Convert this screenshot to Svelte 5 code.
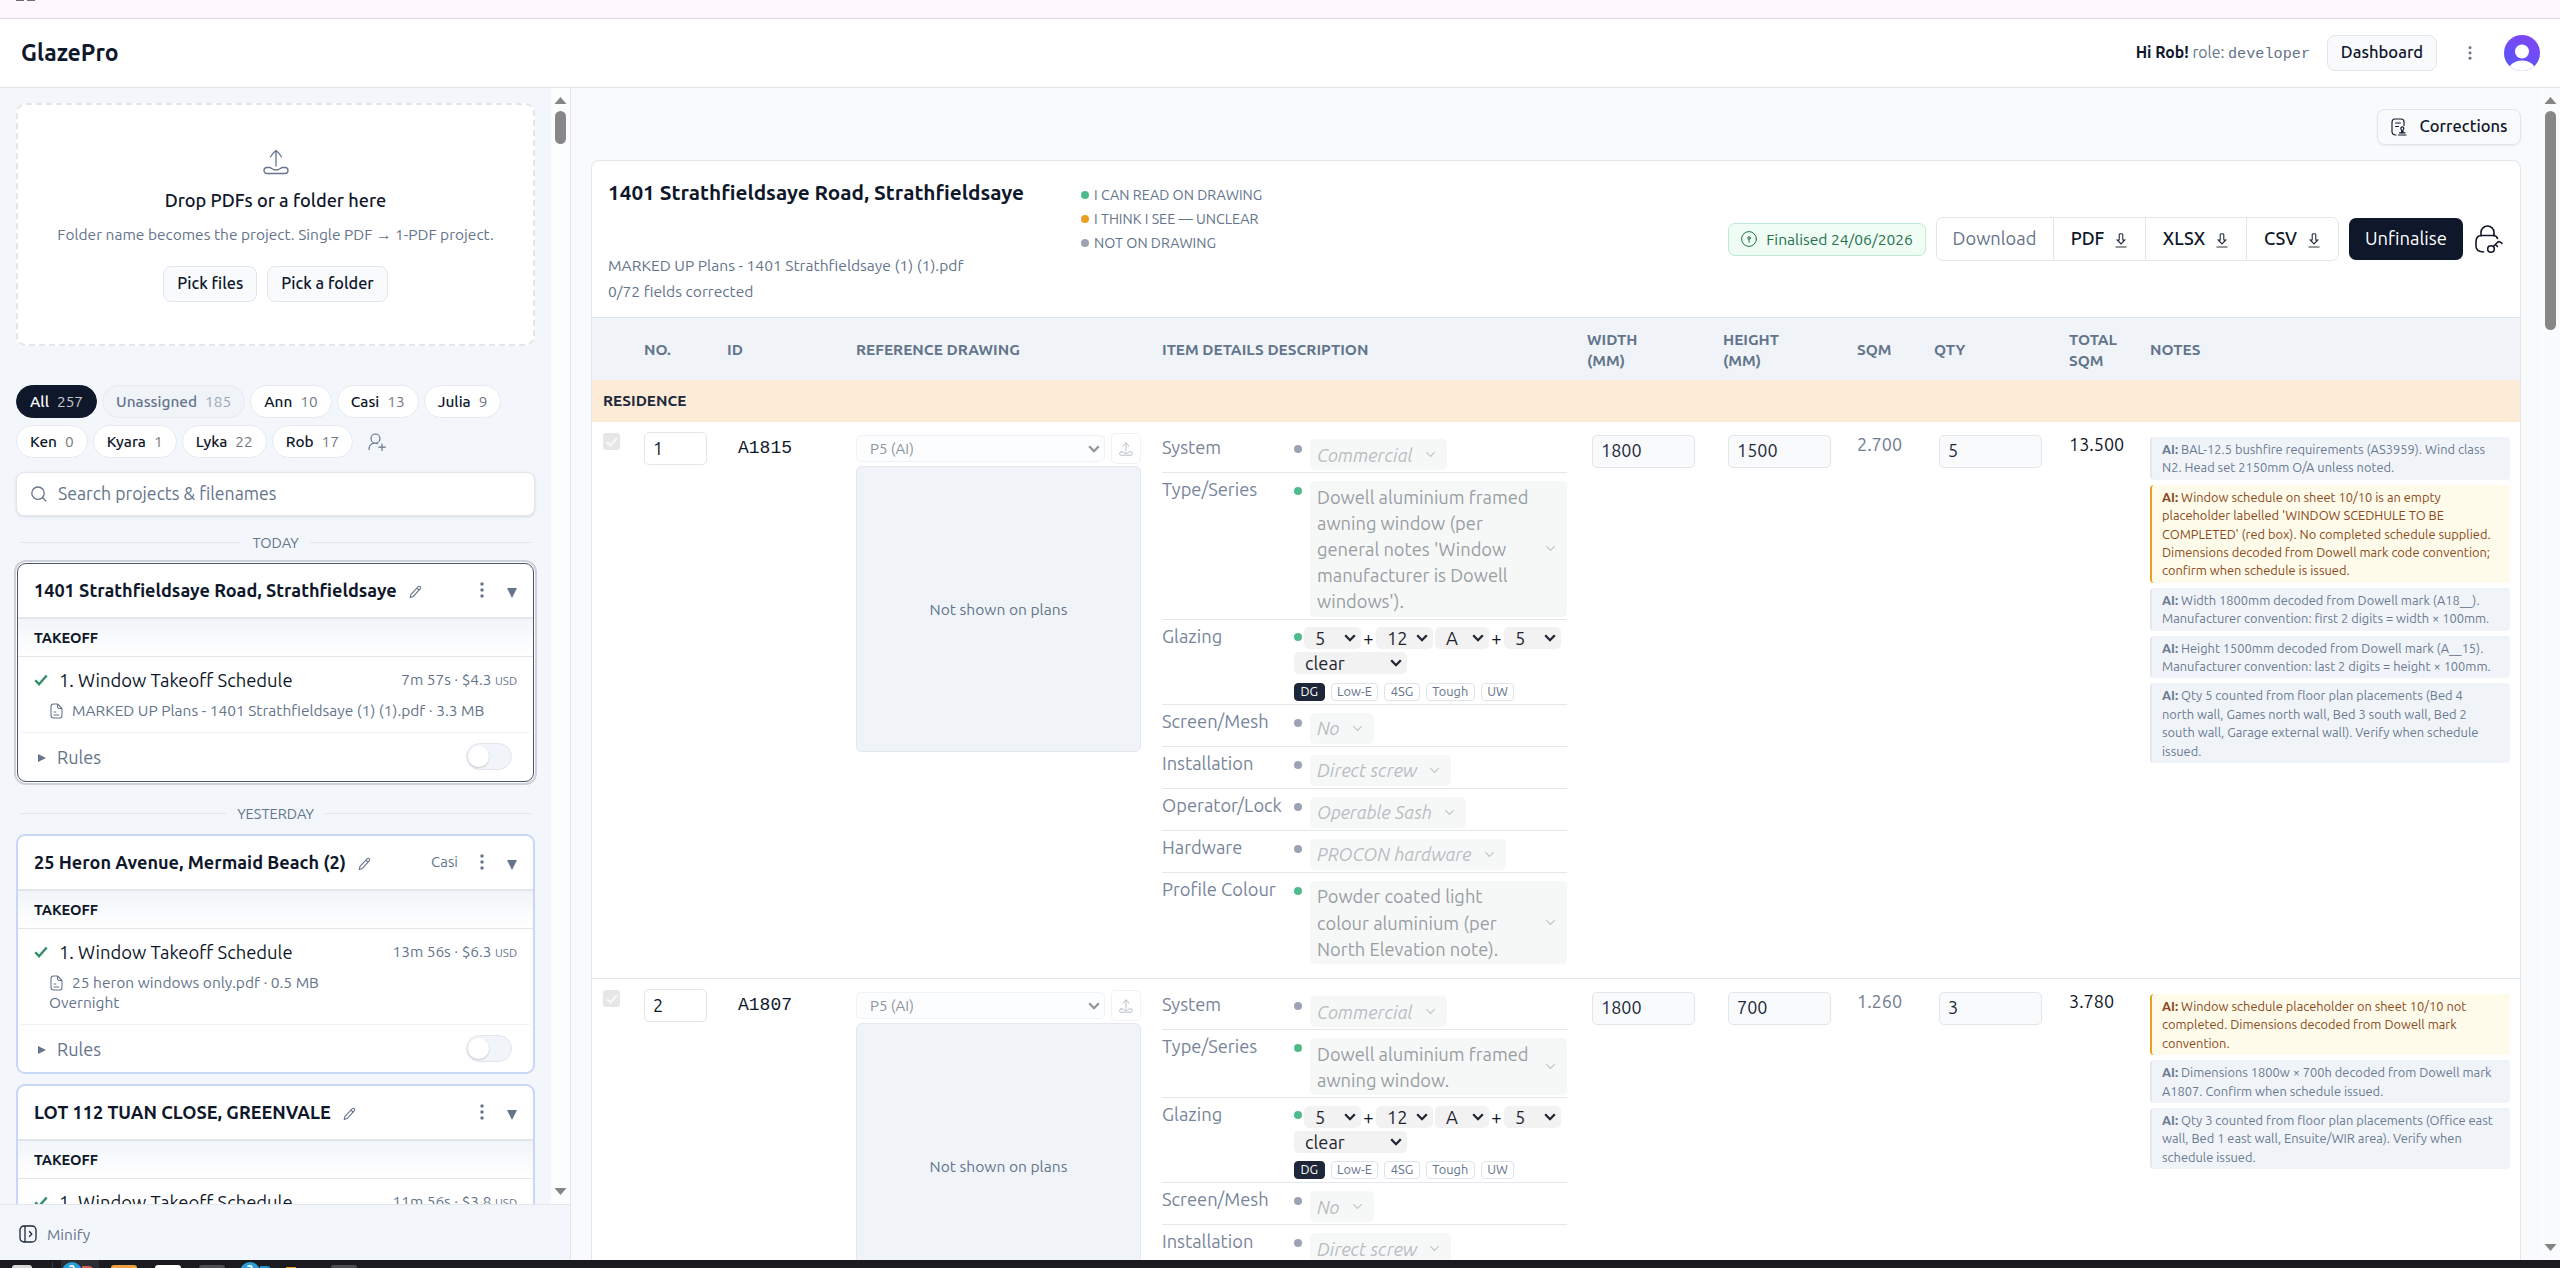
<script lang="ts">
  interface Note {
    text: string;
    warn?: boolean;
  }

  interface Item {
    no: number;
    id: string;
    series: string;
    width: number;
    height: number;
    sqm: string;
    qty: number;
    total: string;
    notes: Note[];
  }

  interface Project {
    title: string;
    owner?: string;
    time: string;
    cost: string;
    file: string;
    extra?: string;
    selected?: boolean;
  }

  const people = [
    { name: "All", count: 257, kind: "active" },
    { name: "Unassigned", count: 185, kind: "faded" },
    { name: "Ann", count: 10 },
    { name: "Casi", count: 13 },
    { name: "Julia", count: 9 },
    { name: "Ken", count: 0 },
    { name: "Kyara", count: 1 },
    { name: "Lyka", count: 22 },
    { name: "Rob", count: 17 },
  ];

  const today: Project[] = [
    {
      title: "1401 Strathfieldsaye Road, Strathfieldsaye",
      time: "7m 57s",
      cost: "$4.3",
      file: "MARKED UP Plans - 1401 Strathfieldsaye (1) (1).pdf · 3.3 MB",
      selected: true,
    },
  ];

  const yesterday: Project[] = [
    {
      title: "25 Heron Avenue, Mermaid Beach (2)",
      owner: "Casi",
      time: "13m 56s",
      cost: "$6.3",
      file: "25 heron windows only.pdf · 0.5 MB",
      extra: "Overnight",
    },
    {
      title: "LOT 112 TUAN CLOSE, GREENVALE",
      time: "11m 56s",
      cost: "$3.8",
      file: "",
    },
  ];

  const legend = [
    { tone: "green", label: "I CAN READ ON DRAWING" },
    { tone: "amber", label: "I THINK I SEE — UNCLEAR" },
    { tone: "grey", label: "NOT ON DRAWING" },
  ];

  const columns = [
    "",
    "NO.",
    "ID",
    "REFERENCE DRAWING",
    "ITEM DETAILS DESCRIPTION",
    "WIDTH (MM)",
    "HEIGHT (MM)",
    "SQM",
    "QTY",
    "TOTAL SQM",
    "NOTES",
  ];

  const formats = ["PDF", "XLSX", "CSV"];
  const tags = ["DG", "Low-E", "4SG", "Tough", "UW"];

  const items: Item[] = [
    {
      no: 1,
      id: "A1815",
      series: "Dowell aluminium framed awning window (per general notes 'Window manufacturer is Dowell windows').",
      width: 1800,
      height: 1500,
      sqm: "2.700",
      qty: 5,
      total: "13.500",
      notes: [
        { text: "BAL-12.5 bushfire requirements (AS3959). Wind class N2. Head set 2150mm O/A unless noted." },
        {
          text: "Window schedule on sheet 10/10 is an empty placeholder labelled 'WINDOW SCEDHULE TO BE COMPLETED' (red box). No completed schedule supplied. Dimensions decoded from Dowell mark code convention; confirm when schedule is issued.",
          warn: true,
        },
        { text: "Width 1800mm decoded from Dowell mark (A18__). Manufacturer convention: first 2 digits = width × 100mm." },
        { text: "Height 1500mm decoded from Dowell mark (A__15). Manufacturer convention: last 2 digits = height × 100mm." },
        { text: "Qty 5 counted from floor plan placements (Bed 4 north wall, Games north wall, Bed 3 south wall, Bed 2 south wall, Garage external wall). Verify when schedule issued." },
      ],
    },
    {
      no: 2,
      id: "A1807",
      series: "Dowell aluminium framed awning window.",
      width: 1800,
      height: 700,
      sqm: "1.260",
      qty: 3,
      total: "3.780",
      notes: [
        {
          text: "Window schedule placeholder on sheet 10/10 not completed. Dimensions decoded from Dowell mark convention.",
          warn: true,
        },
        { text: "Dimensions 1800w × 700h decoded from Dowell mark A1807. Confirm when schedule issued." },
        { text: "Qty 3 counted from floor plan placements (Office east wall, Bed 1 east wall, Ensuite/WIR area). Verify when schedule issued." },
      ],
    },
  ];
</script>

{#snippet chevron(cls: string)}
  <svg class="chev {cls}" viewBox="0 0 12 8"><path d="M1.2 1.2 6 6.2l4.8-5" /></svg>
{/snippet}

{#snippet uploadIcon(cls: string)}
  <svg class="line {cls}" viewBox="0 0 26 26">
    <path d="M13 17V2M7.500 8C9 5.500 11 3 13 1.500 15 3 17 5.500 18.500 8" />
    <path d="M4 18.500h2.500c2 0 2.500 2.500 6.500 2.500s4.500-2.500 6.500-2.500H22c1.800 0 3 1.200 3 3s-1.200 3-3 3H4c-1.800 0-3-1.200-3-3s1.200-3 3-3Z" />
  </svg>
{/snippet}

{#snippet kebab()}
  <svg class="kebab" viewBox="0 0 4 16">
    <circle cx="2" cy="2" r="1.700" /><circle cx="2" cy="8" r="1.700" /><circle cx="2" cy="14" r="1.700" />
  </svg>
{/snippet}

{#snippet projectCard(p: Project)}
  <section class="project" class:selected={p.selected}>
    <div class="project-head">
      <h3>{p.title}</h3>
      <svg class="line pencil" viewBox="0 0 13 14">
        <path d="M1.200 12.600 2 9.400 9.300 1.700c.6-.6 1.500-.6 2 0s.6 1.400 0 2L4.200 11.600 1.200 12.600ZM8 3.200l2.100 2.100" />
      </svg>
      <span class="grow"></span>
      {#if p.owner}<span class="owner">{p.owner}</span>{/if}
      {@render kebab()}
      <svg class="tri" viewBox="0 0 10 10"><path d="M0 0h10L5 10Z" /></svg>
    </div>
    <div class="takeoff">TAKEOFF</div>
    <div class="job">
      <div class="job-main">
        <svg class="check" viewBox="0 0 14 12"><path d="M1.300 6.200 5 10.200 12.700 1.500" /></svg>
        <span class="job-name">1. Window Takeoff Schedule</span>
        <span class="grow"></span>
        <span class="job-meta">{p.time} · {p.cost} <small>USD</small></span>
      </div>
      {#if p.file}
        <div class="job-file">
          <svg class="line doc" viewBox="0 0 13 16">
            <path d="M7.500 1H3.500C2 1 1 2 1 3.500v9C1 14 2 15 3.500 15h6c1.500 0 2.500-1 2.500-2.500V5.500ZM7.500 1v3c0 1 .5 1.500 1.500 1.500h3M4 9h2M4 12h5" />
          </svg>
          {p.file}
        </div>
      {/if}
      {#if p.extra}<div class="job-extra">{p.extra}</div>{/if}
    </div>
    {#if p.file}
      <div class="rules">
        <svg class="play" viewBox="0 0 8 8"><path d="M0 0 8 4 0 8Z" /></svg>
        <span>Rules</span>
        <span class="grow"></span>
        <span class="toggle"><i></i></span>
      </div>
    {/if}
  </section>
{/snippet}

{#snippet spec(label: string, value: string, known: boolean)}
  <div class="spec">
    <span class="label">{label}</span>
    <span class="dot {known ? 'green' : 'grey'}"></span>
    <div class="value" class:known>
      <span>{value}</span>
      {@render chevron("thin")}
    </div>
  </div>
{/snippet}

{#snippet pick(value: string)}
  <span class="pick">{value}{@render chevron("bold")}</span>
{/snippet}

<div class="app">
  <div class="browser-strip"><i></i><i></i></div>

  <header>
    <div class="logo">GlazePro</div>
    <span class="grow"></span>
    <div class="hello"><b>Hi Rob!</b> role: <code>developer</code></div>
    <button class="btn dashboard">Dashboard</button>
    {@render kebab()}
    <svg class="avatar" viewBox="0 0 36 36">
      <defs>
        <linearGradient id="avatar-bg" x1="0.7" y1="0" x2="0.2" y2="1">
          <stop offset="0" stop-color="#7f45f5" />
          <stop offset="1" stop-color="#5757f6" />
        </linearGradient>
        <clipPath id="avatar-clip"><circle cx="18" cy="18" r="18" /></clipPath>
      </defs>
      <g clip-path="url(#avatar-clip)">
        <rect width="36" height="36" fill="url(#avatar-bg)" />
        <circle cx="18" cy="16.500" r="7" fill="#fff" />
        <ellipse cx="18" cy="36" rx="13.500" ry="10.500" fill="#fff" />
      </g>
    </svg>
  </header>

  <div class="body">
    <aside>
      <div class="scroll">
        <div class="side">
          <div class="drop">
            {@render uploadIcon("big")}
            <div class="drop-title">Drop PDFs or a folder here</div>
            <div class="drop-desc">Folder name becomes the project. Single PDF → 1-PDF project.</div>
            <div class="drop-btns">
              <button class="btn">Pick files</button>
              <button class="btn">Pick a folder</button>
            </div>
          </div>

          <div class="chips">
            {#each people as p}
              <span class="chip {p.kind ?? ''}">{p.name} <em>{p.count}</em></span>
            {/each}
            <svg class="line add-user" viewBox="0 0 18 18">
              <path d="M1 16.500c0-3.500 2-6 5.500-6.500 1 0 2 .1 3 .6M7.500 10a4.500 4.500 0 1 0 0-9 4.500 4.500 0 0 0 0 9ZM14 11v6.500M10.800 14.200h6.500" />
            </svg>
          </div>

          <div class="search">
            <svg class="line" viewBox="0 0 16 16"><circle cx="7" cy="7.200" r="6.200" /><path d="m12 12 3 3" /></svg>
            Search projects &amp; filenames
          </div>

          <div class="day">TODAY</div>
          {#each today as p}{@render projectCard(p)}{/each}
          <div class="day second">YESTERDAY</div>
          {#each yesterday as p}{@render projectCard(p)}{/each}
        </div>
        <div class="bar">
          <svg class="arrow" viewBox="0 0 12 7"><path d="M0 7h12L6 0Z" /></svg>
          <i class="thumb short"></i>
          <span class="grow"></span>
          <svg class="arrow" viewBox="0 0 12 7"><path d="M0 0h12L6 7Z" /></svg>
        </div>
      </div>
      <div class="minify">
        <svg viewBox="0 0 18 18"><rect x="1" y="1" width="16" height="16" rx="4" /><path d="M6 1v16M10.200 6.200 12.800 9l-2.600 2.800" /></svg>
        Minify
      </div>
    </aside>

    <main>
      <div class="content">
        <div class="actions">
          <button class="btn corrections">
            <svg class="line" viewBox="0 0 16 18">
              <path d="M5 17C2.500 17 1 16 1 13.500v-9C1 2 2 1 4 1h6c2 0 3 1 3 3v3.500M4.500 5h5M4.500 8.500h3" />
              <path d="M7.500 17h7.500M8.500 14.800h5.500M10.500 14.500c.5-1 .5-2-.2-3a1.500 1.500 0 1 1 2 0c-.6 1-.6 2-.1 3" />
            </svg>
            Corrections
          </button>
        </div>

        <div class="sheet">
          <div class="sheet-head">
            <div class="titles">
              <h2>1401 Strathfieldsaye Road, Strathfieldsaye</h2>
              <div>MARKED UP Plans - 1401 Strathfieldsaye (1) (1).pdf</div>
              <div>0/72 fields corrected</div>
            </div>
            <div class="legend">
              {#each legend as l}
                <div><span class="dot {l.tone}"></span>{l.label}</div>
              {/each}
            </div>
            <span class="grow"></span>
            <div class="tools">
              <span class="badge">
                <svg class="line" viewBox="0 0 16 16"><circle cx="8" cy="8" r="7.400" /><circle cx="8" cy="7" r="1.300" /><path d="M8 8.300v3" /></svg>
                Finalised 24/06/2026
              </span>
              <div class="group">
                <span class="muted">Download</span>
                {#each formats as f}
                  <span>{f}
                    <svg viewBox="0 0 12 15"><path class="stroke" d="M4.200 1.500c0-1 3.600-1 3.600 0V7h2L6 11 2.200 7h2Z" /><path class="base" d="M.5 14h11" /></svg>
                  </span>
                {/each}
              </div>
              <button class="primary">Unfinalise</button>
              <svg class="lock" viewBox="0 0 28 29">
                <path d="M6 11V7.500a6.500 6.500 0 0 1 13 0V11M8.500 27C4 27 1 25.500 1 21v-4c0-4 2-6.500 5.500-6.500H18c2.500 0 4 1 4.500 3" />
                <circle cx="16" cy="24" r="3.300" /><path d="m18.300 21.500 4-4c1.500-1.500 3-1 4.700 1M20.500 19.500l2 2" />
              </svg>
            </div>
          </div>

          <div class="row thead">
            {#each columns as c}
              <div class="th" class:two={c.includes(" (") || c === "TOTAL SQM"}>{c}</div>
            {/each}
          </div>
          <div class="section">RESIDENCE</div>

          {#each items as item}
            <div class="row item">
              <div class="c-check">
                <span><svg viewBox="0 0 12 10"><path d="M1 5.200 4.500 8.500 11 1" /></svg></span>
              </div>
              <div class="c-no"><span class="field">{item.no}</span></div>
              <div class="c-id">{item.id}</div>
              <div class="c-ref">
                <div class="ref-top">
                  <span class="ref-select">P5 (AI){@render chevron("bold")}</span>
                  <span class="ref-up">{@render uploadIcon("small")}</span>
                </div>
                <div class="plan">Not shown on plans</div>
              </div>
              <div class="c-spec">
                {@render spec("System", "Commercial", false)}
                {@render spec("Type/Series", item.series, true)}
                <div class="spec">
                  <span class="label">Glazing</span>
                  <div class="glazing">
                    <div class="picks">
                      <span class="dot green"></span>{@render pick("5")}<b>+</b>{@render pick("12")}{@render pick("A")}<b>+</b>{@render pick("5")}
                    </div>
                    <div class="picks wide">{@render pick("clear")}</div>
                    <div class="tags">
                      {#each tags as t, i}<span class:on={i === 0}>{t}</span>{/each}
                    </div>
                  </div>
                </div>
                {@render spec("Screen/Mesh", "No", false)}
                {@render spec("Installation", "Direct screw", false)}
                {@render spec("Operator/Lock", "Operable Sash", false)}
                {@render spec("Hardware", "PROCON hardware", false)}
                {@render spec("Profile Colour", "Powder coated light colour aluminium (per North Elevation note).", true)}
              </div>
              <div class="c-num"><span class="field dim">{item.width}</span></div>
              <div class="c-num"><span class="field dim">{item.height}</span></div>
              <div class="c-sum">{item.sqm}</div>
              <div class="c-num"><span class="field dim">{item.qty}</span></div>
              <div class="c-sum total">{item.total}</div>
              <div class="c-notes">
                {#each item.notes as n}
                  <p class:warn={n.warn}><b>AI:</b> {n.text}</p>
                {/each}
              </div>
            </div>
          {/each}
        </div>
      </div>
      <div class="bar right">
        <svg class="arrow" viewBox="0 0 12 7"><path d="M0 7h12L6 0Z" /></svg>
        <i class="thumb"></i>
        <span class="grow"></span>
        <svg class="arrow" viewBox="0 0 12 7"><path d="M0 0h12L6 7Z" /></svg>
      </div>
    </main>
  </div>

  <div class="taskbar">
    <i class="t-round"></i>
    <i class="t-sep"></i>
    <div class="t-active"><b>2</b><i class="t-red"></i></div>
    <i class="t-app orange"></i>
    <i class="t-app white"></i>
    <i class="t-app dark"></i>
    <div class="t-mail"><b>2</b><i></i></div>
    <i class="t-small"></i>
    <i class="t-app dark last"></i>
  </div>
</div>

<style>
  :global(body) {
    background: #f8fafc;
    overflow: hidden;
  }

  * {
    box-sizing: border-box;
  }

  .app {
    width: 2560px;
    height: 1268px;
    display: flex;
    flex-direction: column;
    overflow: hidden;
    font-family: Ubuntu, "Noto Sans", sans-serif;
    font-size: 18px;
    color: #0f172a;
  }

  .grow {
    flex: 1;
  }

  svg {
    flex: none;
    display: block;
  }

  .line {
    fill: none;
    stroke: currentColor;
    stroke-width: 1.3;
    stroke-linecap: round;
    stroke-linejoin: round;
  }

  .chev {
    width: 12px;
    height: 8px;
    fill: none;
    stroke: currentColor;
    stroke-width: 1.3;
  }

  .chev.bold {
    stroke-width: 2.3;
  }

  .browser-strip {
    flex: none;
    height: 19px;
    background: #fef7fe;
    border-bottom: 1px solid #e5dbe6;
    display: flex;
    gap: 3px;
    padding-left: 16px;
  }

  .browser-strip i {
    width: 8px;
    height: 1px;
    background: #6f6a72;
  }

  header {
    flex: none;
    height: 69px;
    background: #fff;
    border-bottom: 1px solid #e2e4e8;
    display: flex;
    align-items: center;
    padding: 0 20px 1px 21px;
  }

  .logo {
    font-size: 23px;
    font-weight: 600;
  }

  .hello {
    font-size: 15.8px;
    color: #64748b;
    margin-right: 17px;
  }

  .hello b {
    color: #0f172a;
  }

  code {
    font-family: "Liberation Mono", monospace;
    font-size: 15.2px;
  }

  .kebab {
    width: 4px;
    height: 16px;
    fill: #64748b;
  }

  header .kebab {
    height: 14px;
    margin: 0 32px 0 31px;
  }

  .avatar {
    width: 36px;
    height: 36px;
  }

  .btn {
    height: 36px;
    padding: 0 13px 2px;
    border: 1px solid #e2e6ec;
    border-radius: 8px;
    background: #f8fafc;
    color: #0f172a;
    font: inherit;
    font-size: 16.3px;
    font-weight: 500;
  }

  .dashboard {
    width: 110px;
    padding: 0 0 2px;
    font-size: 16.6px;
  }

  .body {
    height: 1172px;
    flex: none;
    display: flex;
  }

  aside {
    width: 571px;
    flex: none;
    display: flex;
    flex-direction: column;
    background: #f3f7fb;
    border-right: 1px solid #e2e5ea;
  }

  .scroll {
    height: 1116px;
    flex: none;
    display: flex;
    overflow: hidden;
  }

  .side {
    width: 551px;
    padding: 15px 16px 0;
  }

  .bar {
    width: 19px;
    height: 100%;
    background: #fcfdfe;
    display: flex;
    flex-direction: column;
    align-items: center;
    padding: 9px 0;
  }

  .bar.right {
    width: 20px;
    background: #f9fbfc;
  }

  .arrow {
    width: 13px;
    height: 7px;
    fill: #858585;
  }

  .thumb {
    width: 11px;
    height: 219px;
    margin-top: 7px;
    border-radius: 6px;
    background: #878787;
  }

  .thumb.short {
    height: 33px;
  }

  .drop {
    height: 243px;
    border: 2px dashed #e2e5ea;
    border-radius: 10px;
    background: #fff;
    display: flex;
    flex-direction: column;
    align-items: center;
    padding-top: 44px;
  }

  .big {
    width: 26px;
    height: 26px;
    color: #64748b;
  }

  .drop-title {
    margin-top: 12px;
    line-height: 26px;
    font-size: 18.2px;
    font-weight: 500;
  }

  .drop-desc {
    margin-top: 11px;
    font-size: 15.5px;
    line-height: 22px;
    color: #64748b;
  }

  .drop-btns {
    display: flex;
    gap: 10px;
    margin-top: 20px;
  }

  .chips {
    display: flex;
    flex-wrap: wrap;
    gap: 7px 5px;
    margin-top: 39px;
  }

  .chip {
    height: 33px;
    padding: 0 13px 1px;
    border: 1px solid #e6eaf0;
    border-radius: 17px;
    background: #fff;
    font-size: 15.4px;
    font-weight: 500;
    display: flex;
    align-items: center;
    gap: 8px;
  }

  .chip em {
    font-style: normal;
    font-weight: 400;
    opacity: 0.6;
  }

  .chip.active {
    background: #0f172a;
    border-color: #0f172a;
    color: #fff;
  }

  .chip.active em {
    opacity: 0.75;
  }

  .chip.faded {
    background: #f0f3f8;
    color: #64748b;
  }

  .add-user {
    width: 18px;
    height: 18px;
    margin: 8px 0 0 10px;
    color: #64748b;
    stroke-width: 1.2;
  }

  .search {
    height: 44px;
    margin-top: 14px;
    padding: 0 14px 2px;
    border: 1px solid #e2e6ec;
    border-radius: 8px;
    background: #fff;
    box-shadow: 0 1px 3px rgba(15, 23, 42, 0.12);
    display: flex;
    align-items: center;
    gap: 11px;
    font-size: 17.7px;
    color: #64748b;
  }

  .search svg {
    width: 16px;
    height: 16px;
    margin-top: 2px;
  }

  .day {
    height: 20px;
    margin: 16px 4px 11px;
    display: flex;
    align-items: center;
    gap: 11px;
    font-size: 14.6px;
    color: #64748b;
  }

  .day.second {
    margin: 21px 4px 11px;
  }

  .day::before,
  .day::after {
    content: "";
    flex: 1;
    height: 1px;
    background: #e2e6ec;
  }

  .project {
    margin-bottom: 10px;
    border: 2px solid #c8d6f8;
    border-radius: 9px;
    background: #fff;
    overflow: hidden;
  }

  .project.selected {
    margin: 0 1px;
    border: 1px solid #4b5168;
    padding: 0 0 1px;
    box-shadow: 0 0 0 1px #fff, 0 0 0 3px #cdd0d8;
  }

  .project-head {
    height: 55px;
    padding: 0 16px 2px;
    border-bottom: 2px solid #e2e6ea;
    display: flex;
    align-items: center;
  }

  h3 {
    margin: 0;
    font-size: 18.1px;
    font-weight: 600;
    white-space: nowrap;
  }

  .pencil {
    width: 13px;
    height: 14px;
    margin: 4px 0 0 12px;
    color: #64748b;
    stroke-width: 1.1;
  }

  .owner {
    margin-right: 22px;
    font-size: 14.9px;
    color: #64748b;
  }

  .tri {
    width: 10px;
    height: 10px;
    margin: 6px 0 0 23px;
    fill: #64748b;
  }

  .takeoff {
    height: 38px;
    padding: 0 16px;
    border-bottom: 1px solid #e2e5ea;
    background: linear-gradient(#f1f5f9, #fff);
    line-height: 37px;
    font-size: 14.6px;
    font-weight: 600;
  }

  .job {
    margin: 0 3px;
    padding: 9px 13px 8px;
    border-bottom: 1px solid #f0f2f5;
  }

  .job-main {
    display: flex;
    align-items: center;
    height: 27px;
  }

  .check {
    width: 14px;
    height: 12px;
    margin-right: 11px;
    fill: none;
    stroke: #2f8f66;
    stroke-width: 2.4;
  }

  .job-name {
    font-size: 18.4px;
  }

  .job-meta {
    font-size: 15.4px;
    color: #64748b;
  }

  .job-meta small {
    font-size: 11.5px;
  }

  .job-file {
    height: 27px;
    margin: 4px 0 0 16px;
    display: flex;
    align-items: center;
    gap: 9px;
    font-size: 15.5px;
    color: #64748b;
    white-space: nowrap;
  }

  .doc {
    width: 13px;
    height: 16px;
    stroke-width: 1.1;
  }

  .job-extra {
    margin: -3px 0 3px 15px;
    line-height: 20px;
    font-size: 15.5px;
    color: #64748b;
  }

  .rules {
    height: 47px;
    padding: 0 21px 0 20px;
    display: flex;
    align-items: center;
    gap: 11px;
    color: #64748b;
  }

  .play {
    width: 8px;
    height: 8px;
    fill: #64748b;
    margin-top: 2px;
  }

  .toggle {
    width: 46px;
    height: 27px;
    border: 1px solid #e2e6ec;
    border-radius: 14px;
    background: #f1f4f8;
    padding: 2px 1px;
  }

  .toggle i {
    display: block;
    width: 21px;
    height: 21px;
    border-radius: 50%;
    background: #fff;
    box-shadow: 0 1px 2px rgba(15, 23, 42, 0.2);
  }

  .minify {
    flex: 1;
    border-top: 1px solid #e2e5ea;
    padding: 3px 0 0 19px;
    display: flex;
    align-items: center;
    gap: 10px;
    font-size: 15.4px;
    color: #64748b;
  }

  .minify svg {
    width: 18px;
    height: 18px;
    fill: none;
    stroke: #1e293b;
    stroke-width: 1.3;
  }

  main {
    flex: 1;
    display: flex;
    overflow: hidden;
    background: #f8fafc;
  }

  .content {
    width: 1969px;
    padding: 21px 19px 0 20px;
  }

  .actions {
    height: 36px;
    display: flex;
    justify-content: flex-end;
  }

  .corrections {
    width: 144px;
    padding: 0 0 2px;
    display: flex;
    align-items: center;
    justify-content: center;
    gap: 13px;
    font-size: 16.5px;
    box-shadow: 0 1px 2px rgba(15, 23, 42, 0.06);
  }

  .corrections svg {
    width: 16px;
    height: 18px;
    margin-top: 2px;
    stroke-width: 1.15;
  }

  .sheet {
    margin-top: 15px;
    height: 1120px;
    border: 1px solid #e2e6ec;
    border-radius: 8px;
    background: #fff;
    overflow: hidden;
  }

  .sheet-head {
    height: 157px;
    border-bottom: 1px solid #e2e5ea;
    padding: 0 17px 0 16px;
    display: flex;
  }

  .titles {
    width: 473px;
    font-size: 15.6px;
    line-height: 26px;
    color: #64748b;
  }

  h2 {
    margin: 18px 0 45px;
    font-size: 20.75px;
    line-height: 28px;
    font-weight: 600;
    color: #0f172a;
    white-space: nowrap;
  }

  .dot {
    width: 8px;
    height: 8px;
    flex: none;
    border-radius: 50%;
    background: #9ca3b4;
  }

  .dot.green {
    background: #4fba8c;
  }

  .dot.amber {
    background: #e8a020;
  }

  .legend {
    padding-top: 22px;
    font-size: 14.3px;
    line-height: 24px;
    color: #64748b;
  }

  .legend div {
    display: flex;
    align-items: center;
    gap: 5px;
  }

  .tools {
    display: flex;
    align-items: center;
  }

  .badge {
    width: 198px;
    height: 33px;
    border: 1px solid #bfe9d3;
    border-radius: 7px;
    background: #effdf5;
    color: #23704c;
    font-size: 15.6px;
    display: flex;
    align-items: center;
    justify-content: center;
    gap: 9px;
    white-space: nowrap;
  }

  .badge svg {
    width: 16px;
    height: 16px;
    stroke-width: 1;
  }

  .group {
    height: 44px;
    margin-left: 10px;
    border: 1px solid #e2e5ea;
    border-radius: 7px;
    display: flex;
    font-weight: 500;
  }

  .group span {
    width: 92px;
    display: flex;
    align-items: center;
    justify-content: center;
    gap: 11px;
    padding: 0 1px 2px 0;
    border-left: 1px solid #e2e5ea;
    font-size: 18px;
  }

  .group span:nth-child(3) {
    width: 101px;
  }

  .group .muted {
    width: 116px;
    border-left: 0;
    color: #64748b;
    font-size: 18.3px;
    font-weight: 400;
  }

  .group svg {
    width: 12px;
    height: 15px;
    margin-top: 5px;
  }

  .stroke {
    fill: none;
    stroke: #1e293b;
    stroke-width: 1.1;
  }

  .base {
    stroke: #777;
    stroke-width: 1.5;
  }

  .primary {
    width: 114px;
    height: 42px;
    margin: 0 12px 0 10px;
    padding: 0 0 2px;
    border: 0;
    border-radius: 7px;
    background: #0f172a;
    color: #fff;
    font: inherit;
    font-size: 18.4px;
  }

  .lock {
    width: 28px;
    height: 29px;
    fill: none;
    stroke: #111827;
    stroke-width: 1.6;
    stroke-linecap: round;
  }

  .row {
    display: grid;
    grid-template-columns: 52px 83px 129px 306px 425px 136px 134px 77px 135px 81px 370px;
  }

  .thead {
    height: 62px;
    background: #f0f4f9;
    align-items: center;
    color: #64748b;
    font-size: 15.4px;
    font-weight: 600;
    line-height: 21px;
    padding-top: 1px;
  }

  .two {
    width: 60px;
  }

  .section {
    height: 42px;
    padding-left: 11px;
    background: #fcecd7;
    font-size: 15.4px;
    font-weight: 600;
    line-height: 42px;
    color: #1e293b;
  }

  .item {
    height: 557px;
    border-bottom: 1px solid #e2e5ea;
  }

  .c-check {
    padding: 11px 0 0 11px;
  }

  .c-check span {
    width: 17px;
    height: 17px;
    border-radius: 3px;
    background: #e4e6e8;
    display: grid;
    place-items: center;
  }

  .c-check svg {
    width: 12px;
    height: 10px;
    fill: none;
    stroke: #f8f8f8;
    stroke-width: 2;
  }

  .field {
    display: block;
    height: 33px;
    border: 1px solid #e2e5ea;
    border-radius: 5px;
    background: #fff;
    padding-left: 8px;
    line-height: 31px;
  }

  .c-no {
    padding-top: 10px;
  }

  .c-no .field {
    width: 63px;
  }

  .c-num {
    padding: 13px 0 0 5px;
  }

  .field.dim {
    width: 103px;
    background: #f8fafc;
    line-height: 29px;
    color: #1e293b;
  }

  .c-id {
    padding: 13px 0 0 11px;
    font-family: "Liberation Mono", monospace;
    line-height: 26px;
  }

  .c-ref {
    width: 285px;
    padding-top: 11px;
  }

  .ref-top {
    display: flex;
    align-items: center;
    justify-content: space-between;
    color: #8e949b;
  }

  .ref-select {
    width: 249px;
    height: 27px;
    padding: 0 4px 0 13px;
    border: 1px solid #f0f2f5;
    border-radius: 5px;
    background: #fcfdfe;
    display: flex;
    align-items: center;
    justify-content: space-between;
    font-size: 15px;
  }

  .ref-up {
    width: 30px;
    height: 31px;
    border: 1px solid #f0f2f5;
    border-radius: 5px;
    display: grid;
    place-items: center;
  }

  .small {
    width: 14px;
    height: 14px;
    stroke-width: 1.8;
    color: #b4bac4;
  }

  .plan {
    height: 286px;
    margin-top: 2px;
    border: 1px solid #e2e8f0;
    border-radius: 6px;
    background: #f0f4f9;
    display: grid;
    place-items: center;
    font-size: 15.6px;
    color: #64748b;
  }

  .c-spec {
    width: 405px;
    padding-top: 9px;
    font-size: 18.3px;
  }

  .spec {
    display: flex;
    align-items: flex-start;
    padding: 8px 0 2px;
    border-bottom: 1px solid #e4e7eb;
  }

  .spec:last-child {
    border-bottom: 0;
  }

  .label {
    width: 132px;
    margin-top: -5px;
    line-height: 26px;
    color: #78859a;
    white-space: nowrap;
  }

  .spec > .dot {
    margin: 6px 8px 0 0;
  }

  .value {
    display: flex;
    align-items: center;
    padding: 2.5px 11px 2.5px 7px;
    border-radius: 5px;
    background: #f6f8f8;
    color: #b9bdc2;
    font-style: italic;
    line-height: 26.1px;
    gap: 12px;
  }

  .value.known {
    width: 257px;
    color: #999ea3;
    font-style: normal;
    justify-content: space-between;
  }

  .value .chev {
    width: 11px;
    height: 7px;
    color: #bfc3c8;
  }

  .glazing {
    margin-top: -1px;
    padding-bottom: 1px;
  }

  .picks {
    height: 23px;
    display: flex;
    align-items: center;
  }

  .picks .dot {
    margin: -3px 2px 0 0;
  }

  .picks b {
    width: 15px;
    text-align: center;
    font-weight: 400;
  }

  .pick {
    width: 57px;
    height: 22px;
    padding: 0 5px 0 11px;
    border-radius: 5px;
    background: #f2f2f2;
    display: flex;
    align-items: center;
    justify-content: space-between;
    line-height: 22px;
    color: #1e2430;
  }

  .pick + .pick {
    width: 54px;
    margin-left: 2px;
  }

  .wide {
    margin-top: 2px;
  }

  .wide .pick {
    width: 113px;
  }

  .tags {
    display: flex;
    gap: 6px;
    margin-top: 8px;
  }

  .tags span {
    height: 18px;
    padding: 0 5.5px;
    border: 1px solid #dfe4ec;
    border-radius: 4px;
    font-size: 12.8px;
    line-height: 15px;
    color: #64748b;
  }

  .tags .on {
    background: #1e263a;
    border-color: #1e263a;
    color: #fff;
  }

  .c-sum {
    padding-top: 9px;
    line-height: 26px;
    color: #6f7d92;
  }

  .c-sum.total {
    color: #0f172a;
  }

  .c-notes {
    width: 360px;
    padding-top: 15px;
    display: flex;
    flex-direction: column;
    gap: 5px;
  }

  p {
    margin: 0;
    padding: 3px 15px 3px 10px;
    border-left: 2px solid #e2e8f0;
    border-radius: 4px;
    background: #f0f4f9;
    font-size: 12.85px;
    line-height: 18.4px;
    color: #6b7a90;
  }

  p.warn {
    border-left-color: #e8a020;
    background: #fffbea;
    color: #8a4a20;
  }

  .taskbar {
    height: 8px;
    flex: none;
    background: #1b1b1f;
    display: flex;
    align-items: flex-end;
    overflow: hidden;
  }

  .t-round {
    width: 20px;
    height: 3px;
    margin-left: 12px;
    border-radius: 10px 10px 0 0;
    background: #d8d8d8;
  }

  .t-sep {
    width: 1px;
    height: 6px;
    margin: 0 8px 0 20px;
    background: #3a3a40;
  }

  .t-active,
  .t-mail {
    width: 38px;
    height: 8px;
    display: flex;
    align-items: flex-start;
    background: #2c2c33;
    overflow: hidden;
  }

  .t-active b,
  .t-mail b {
    width: 20px;
    height: 20px;
    margin: 2px 0 0 1px;
    border-radius: 50%;
    background: #2b9ed8;
    color: #fff;
    font-size: 12px;
    line-height: 15px;
    text-align: center;
  }

  .t-red {
    width: 11px;
    height: 4px;
    margin-top: 6px;
    border-radius: 0 4px 0 0;
    background: #d95f52;
  }

  .t-app {
    width: 26px;
    height: 3px;
    margin-left: 18px;
    border-radius: 5px 5px 0 0;
    background: #4d4d52;
  }

  .t-app.orange {
    margin-left: 12px;
    background: #f0a040;
  }

  .t-app.white {
    background: #fff;
  }

  .t-mail {
    margin-left: 14px;
    background: none;
  }

  .t-mail i {
    width: 11px;
    height: 4px;
    margin-top: 6px;
    border-radius: 0 4px 0 0;
    background: #1f8fc8;
  }

  .t-small {
    width: 10px;
    height: 1px;
    margin-left: 9px;
    background: #e8a020;
  }

  .last {
    margin-left: 35px;
  }
</style>
